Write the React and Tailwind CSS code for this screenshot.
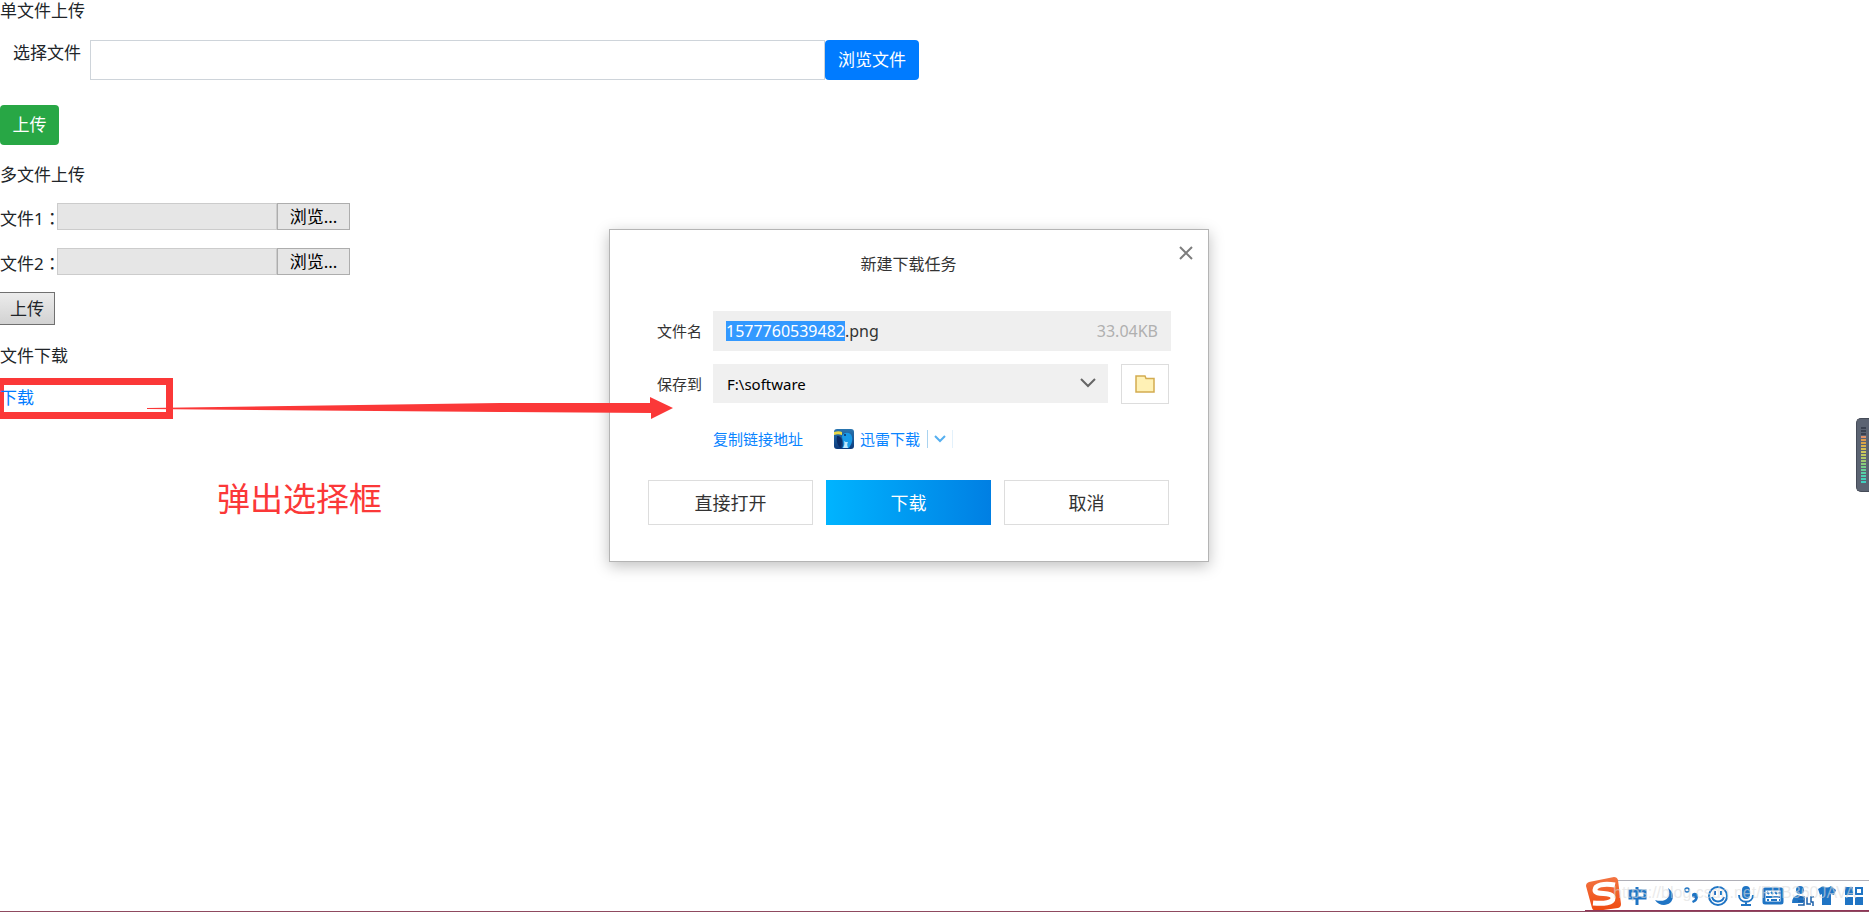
import React, { useEffect, useRef } from 'react';

const LEVELS = [
  '#3a4150', '#3a4150', '#3a4150', '#e0916a', '#dd9a4e', '#d9a447', '#d8b04a', '#d6bd52', '#cfc75a', '#c0c860',
  '#b0c868', '#9fca72', '#8acb7c', '#76cd88', '#66cf98', '#58cfa6', '#4ccfb0', '#46cfb8', '#40cfc0',
];

function FileRow({ id, label }) {
  return (
    <div className="flex h-[27px]">
      <label htmlFor={id} className="w-[57px] whitespace-nowrap pt-[2px]">
        {label}
        <span className="font-['Noto_Sans_CJK_TC',sans-serif]">：</span>
      </label>
      <input id={id} readOnly className="w-[220px] border border-[#ccc] bg-[#e6e6e6] px-1" />
      <button type="button" className="w-[73px] border border-[#adadad] bg-[#e6e6e6] text-center text-black">
        浏览...
      </button>
    </div>
  );
}

function SingleUpload() {
  return (
    <section>
      <p className="mb-[17px] h-[23px] leading-[22px]">单文件上传</p>
      <div className="mb-[25px] flex h-10">
        <label htmlFor="single" className="w-[90px] pl-[13px]">选择文件</label>
        <input id="single" className="min-w-0 flex-1 border border-[#ced4da] px-3" />
        <button type="button" className="w-[94px] rounded-[4px] bg-[#007bff] text-white">浏览文件</button>
      </div>
      <button type="button" className="h-10 w-[59px] rounded-[4px] bg-[#28a745] text-white">上传</button>
    </section>
  );
}

function MultiUpload() {
  return (
    <section className="pt-[17px]">
      <p className="mb-[15px]">多文件上传</p>
      <div className="flex flex-col gap-[18px]">
        <FileRow id="file1" label="文件1" />
        <FileRow id="file2" label="文件2" />
      </div>
      <button
        type="button"
        className="mt-[17px] h-[33px] w-[55px] border border-l-0 border-[#707070] bg-gradient-to-b from-[#ececec] to-[#d2d2d2]"
      >
        上传
      </button>
    </section>
  );
}

function ThunderIcon() {
  return (
    <svg width="20" height="20" viewBox="0 0 20 20">
      <defs>
        <linearGradient id="bird" x1="0" y1="0" x2="0" y2="1">
          <stop offset="0" stopColor="#2a76b0" />
          <stop offset="1" stopColor="#0c3a7c" />
        </linearGradient>
      </defs>
      <rect width="20" height="20" rx="3" fill="url(#bird)" />
      <path d="M3 7c3 0 5 2 5 5 0 3-1 5-1 7-3-2-5-6-4-12z" fill="#0a2c66" />
      <path d="M8 7c1-4 9-5 10 1 1 4-1 8-3 11H8c3-4 0-8 0-12z" fill="#189ae8" />
      <path d="M10 12c1 3 0 5-1 7h5c-1-3-1-4 0-6-2 0-3 0-4-1z" fill="#bfe8fb" />
      <path d="M0 3c3-1 6-1 8 0v3C5 5 3 5 0 6z" fill="#e9d84a" />
      <circle cx="11" cy="6" r="1" fill="#0a2c66" />
    </svg>
  );
}

function DownloadDialog() {
  const nameRef = useRef(null);

  // preselect the name without its extension
  useEffect(() => {
    nameRef.current.focus();
    nameRef.current.setSelectionRange(0, 13);
  }, []);

  return (
    <div
      role="dialog"
      aria-label="新建下载任务"
      className="absolute left-[609px] top-[229px] w-[600px] border border-[#b4b4b4] bg-white pb-9 pl-[38px] pr-[39px] pt-[23px] text-[15px] text-[#333] shadow-[0_4px_14px_rgba(0,0,0,0.25)]"
    >
      <button type="button" aria-label="关闭" className="absolute right-[15px] top-4">
        <svg width="14" height="14" viewBox="0 0 14 14" stroke="#7d7d7d" strokeWidth="2">
          <path d="M1 1l12 12M13 1L1 13" />
        </svg>
      </button>
      <h2 className="mb-9 h-[22px] text-center text-base leading-[22px]">新建下载任务</h2>

      <div className="flex h-10 items-center">
        <label htmlFor="name" className="w-[65px] pl-[9px]">文件名</label>
        <div className="mr-[-2px] flex h-10 flex-1 items-center bg-[#efefef] px-[13px]">
          <input
            id="name"
            ref={nameRef}
            defaultValue="1577760539482.png"
            className="h-5 min-w-0 flex-1 text-base leading-5 outline-none selection:bg-[#3399ff] selection:text-white"
          />
          <span className="text-base text-[#b0b0b0]">33.04KB</span>
        </div>
      </div>

      <div className="mt-[13px] flex h-10">
        <label htmlFor="folder" className="w-[65px] pl-[9px] pt-[7px]">保存到</label>
        <div className="relative mr-[13px] h-[39px] flex-1">
          <select id="folder" className="block h-full w-full appearance-none bg-[#f0f0f0] px-[14px] text-black">
            <option>F:\software</option>
          </select>
          <svg className="pointer-events-none absolute right-3 top-[14px]" width="16" height="10" viewBox="0 0 16 10" fill="none" stroke="#666" strokeWidth="2">
            <path d="M1 1l7 7 7-7" />
          </svg>
        </div>
        <button type="button" aria-label="选择目录" className="flex h-10 w-12 items-center justify-center border border-[#ddd]">
          <svg width="20" height="18" viewBox="0 0 20 18">
            <path d="M1 1h9l1 2.500h8V17H1z" fill="#fff1b5" stroke="#d3ac50" strokeWidth="1.500" />
          </svg>
        </button>
      </div>

      <div className="mt-[22px] flex h-[26px] items-center pl-[65px] text-[#0a84ff]">
        <a href="#copy">复制链接地址</a>
        <a href="#thunder" className="ml-[31px] flex items-center gap-[6px]">
          <ThunderIcon />
          迅雷下载
        </a>
        <button type="button" aria-label="更多" className="ml-[7px] flex h-[18px] w-[26px] items-center justify-center border-l border-r border-l-[#a9d3f0] border-r-[#e3f1fb]">
          <svg width="12" height="8" viewBox="0 0 12 8" fill="none" stroke="#55aff0" strokeWidth="2">
            <path d="M1 1l5 5 5-5" />
          </svg>
        </button>
      </div>

      <div className="mt-7 grid grid-cols-3 gap-[13px] text-lg">
        <button type="button" className="h-[45px] border border-[#ddd]">直接打开</button>
        <button type="button" className="h-[45px] bg-gradient-to-r from-[#00b4ff] to-[#007fe3] text-white">下载</button>
        <button type="button" className="h-[45px] border border-[#ddd]">取消</button>
      </div>
    </div>
  );
}

function Arrow() {
  return (
    <svg className="pointer-events-none absolute left-[147px] top-[396px]" width="527" height="24" viewBox="0 0 527 24" fill="#fb3838">
      <path d="M0 12L353 7H503V1l23 11-22 11v-6L353 16 0 13z" />
    </svg>
  );
}

function LevelMeter() {
  return (
    <div className="absolute right-0 top-[418px] flex h-[74px] w-[13px] flex-col items-end gap-px rounded-l-[5px] border border-r-0 border-[#454b58] bg-[#5b6372] pr-[3px] pt-2">
      {LEVELS.map((color, i) => (
        <span key={i} className="h-[2px] w-[5px]" style={{ backgroundColor: color }} />
      ))}
    </div>
  );
}

function InputBar() {
  return (
    <div className="absolute bottom-0 right-0 h-9 w-[284px] overflow-hidden">
      <div className="absolute bottom-0 right-0 h-[31px] w-[256px] border-t border-[#b0b0b8] bg-white" />
      <svg className="absolute inset-0" width="284" height="36" viewBox="0 0 284 36" fill="none" stroke="#1f74c4" strokeWidth="2">
        <defs>
          <linearGradient id="sogou" x1="0" y1="0" x2="0" y2="1">
            <stop offset="0" stopColor="#f27442" />
            <stop offset="1" stopColor="#f04a10" />
          </linearGradient>
        </defs>
        <path d="M4 7l25-5q3 0 4 3l3 24q0 3-3 4l-22 3q-3 0-4-3L1 11q0-3 3-4z" fill="url(#sogou)" stroke="none" />
        <path d="M30 10C19 8 10 10 10 15c0 6 18 1 18 8 0 5-9 6-20 5" stroke="#fff" strokeWidth="5" />
        <g transform="translate(0 4)">
          <path d="M45 12h15v7H45zM52 8v18" strokeWidth="3" />
          <path d="M83 9c4 10-3 15-13 12 5 8 18 6 18-4 0-3-2-6-5-8z" fill="#1f74c4" stroke="none" />
          <circle cx="102" cy="11" r="2" strokeWidth="1.500" />
          <path d="M107 16c0-3 6-3 6 1 0 4-2 6-5 7l-1-2c2-1 3-2 3-3-2 0-3-1-3-3z" fill="#1f74c4" stroke="none" />
          <circle cx="133" cy="17" r="9" />
          <path d="M130 12v4M136 12v4M127 18c2 6 10 6 12 0" />
          <rect x="158" y="8" width="6" height="11" rx="3" fill="#1f74c4" />
          <path d="M154 16c0 9 14 9 14 0M161 23v3M156 26h10" />
          <rect x="179" y="10" width="18" height="14" rx="1" strokeWidth="3" />
          <path d="M182 13l2 2M186 13l2 2M190 13l2 2M194 13l1 2M181 18h14M182 21h2M186 21h6M194 21h1" />
          <circle cx="215" cy="11" r="4" fill="#1f74c4" stroke="none" />
          <path d="M207 24q0-7 6-8l5 2v6z" fill="#1f74c4" stroke="none" />
          <path d="M213 18h6v8h-6M213 22h6M222 18v7h4M229 18h-3v5h2v4" stroke="#1b5fa8" strokeWidth="1.500" />
          <path d="M233 10l5-3q4 3 8 0l5 4-2 5-3-1v11h-9V15l-2 1z" fill="#1f74c4" stroke="none" />
          <path d="M260 8h8v8h-8zM260 18h8v8h-8zM270 18h8v8h-8z" fill="#1f74c4" stroke="none" />
          <path d="M271 9h6v6h-6z" />
        </g>
      </svg>
      <span className="absolute left-[28px] top-2 whitespace-nowrap font-['Liberation_Sans',sans-serif] text-base leading-5 text-[#dcdcdc]/60">
        https://blog.csdn.net/FBB360JAVA
      </span>
      <div className="absolute bottom-0 right-0 h-px w-full bg-[#8f3658]" />
    </div>
  );
}

export default function App() {
  return (
    <div className="relative h-screen overflow-hidden border-b border-[#8f4a60] bg-white font-['Noto_Sans','Noto_Sans_CJK_SC',sans-serif] text-[17px] leading-[26px] text-[#212529]">
      <main className="w-[919px] max-w-full">
        <SingleUpload />
        <MultiUpload />
        <section className="pt-[18px]">
          <p className="mb-[9px]">文件下载</p>
          <div className="h-[41px] w-[173px] border-[7px] border-l-4 border-[#fb3838]">
            <a href="#download" className="-ml-1 text-[#007bff]">下载</a>
          </div>
        </section>
        <p className="mt-[58px] pl-[217px] text-[33px] leading-[44px] text-[#fb3838]">弹出选择框</p>
      </main>
      <DownloadDialog />
      <Arrow />
      <LevelMeter />
      <InputBar />
    </div>
  );
}
